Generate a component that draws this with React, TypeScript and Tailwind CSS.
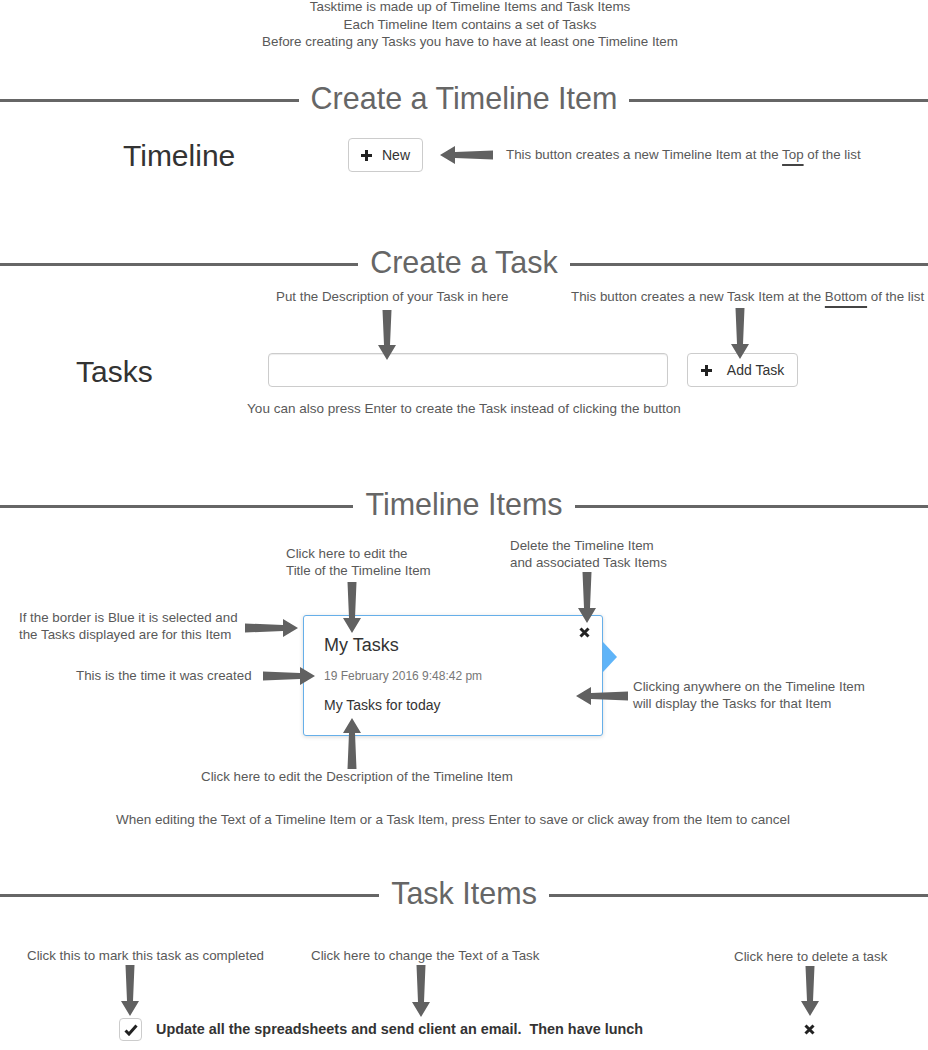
import React from 'react'

type Dir = 'left' | 'right' | 'up' | 'down'

// arrow drawn pointing right, coords swapped for the other directions
function Arrow({ dir, len, className }: { dir: Dir; len: number; className?: string }) {
  const head = 15
  const base: [number, number][] = [
    [0, 4.5],
    [len - head, 6],
    [len - head, 0],
    [len, 9],
    [len - head, 18],
    [len - head, 12],
    [0, 13.5],
  ]
  const pts = base.map(([x, y]) => {
    if (dir === 'right') return [x, y]
    if (dir === 'left') return [len - x, y]
    if (dir === 'down') return [y, x]
    return [y, len - x]
  })
  const horizontal = dir === 'left' || dir === 'right'
  const w = horizontal ? len : 18
  const h = horizontal ? 18 : len
  return (
    <svg width={w} height={h} viewBox={`0 0 ${w} ${h}`} className={className}>
      <polygon points={pts.map((p) => p.join(',')).join(' ')} fill="#616161" />
    </svg>
  )
}

function XIcon({ className }: { className?: string }) {
  return (
    <svg width="11" height="11" viewBox="0 0 11 11" className={className}>
      <path d="M1.5 1.5 L9.5 9.5 M9.5 1.5 L1.5 9.5" stroke="#222" strokeWidth="3" />
    </svg>
  )
}

function PlusIcon() {
  return (
    <svg width="11" height="11" viewBox="0 0 11 11">
      <path d="M4 0h3v4h4v3H7v4H4V7H0V4h4z" fill="#222" />
    </svg>
  )
}

function CheckIcon() {
  return (
    <svg width="14" height="12" viewBox="0 0 14 12">
      <path d="M1.5 6.5 L5 10 L12.5 1.5" stroke="#222" strokeWidth="3" fill="none" />
    </svg>
  )
}

function SectionHeader({ title }: { title: string }) {
  return (
    <div className="flex h-[30px] shrink-0 items-start">
      <div className="mt-[16px] h-[3px] flex-1 bg-[#666]" />
      <h2 className="mx-[12px] whitespace-nowrap text-[30.5px] leading-[30px] text-[#666]">{title}</h2>
      <div className="mt-[16px] h-[3px] flex-1 bg-[#666]" />
    </div>
  )
}

const note = 'absolute whitespace-nowrap text-[13.33px] leading-[17px] text-[#595959]'

export default function App() {
  return (
    <div className="relative flex h-[1050px] w-[928px] flex-col overflow-hidden bg-white font-['Liberation_Sans',Arial,sans-serif]">
      {/* intro */}
      <div className="-mt-[2px] h-[85px] shrink-0 pl-3 text-center text-[13.4px] leading-[17.5px] text-[#595959]">
        <p>Tasktime is made up of Timeline Items and Task Items</p>
        <p>Each Timeline Item contains a set of Tasks</p>
        <p>Before creating any Tasks you have to have at least one Timeline Item</p>
      </div>

      <SectionHeader title="Create a Timeline Item" />
      <div className="h-[134px] shrink-0 pt-[25px]">
        <div className="flex h-[34px] items-center">
          <div className="w-[348px] pl-[123px] pt-[2px] text-[30px] leading-[34px] text-[#333]">Timeline</div>
          <button className="flex h-[34px] w-[75px] items-center justify-center gap-[10px] rounded-[4px] border border-[#ccc] bg-white text-[14px] text-[#333]">
            <PlusIcon />
            New
          </button>
          <Arrow dir="left" len={53} className="ml-[17px]" />
          <span className="ml-[13px] whitespace-nowrap text-[13.33px] text-[#595959]">
            This button creates a new Timeline Item at the{' '}
            <span className="underline decoration-[#444] decoration-2 underline-offset-[5px]">Top</span> of the list
          </span>
        </div>
      </div>

      <SectionHeader title="Create a Task" />
      <div className="h-[212px] shrink-0 pt-[76px]">
        <div className="flex h-[34px] items-center">
          <div className="w-[268px] pl-[76px] pt-[4px] text-[30px] leading-[34px] text-[#333]">Tasks</div>
          <input className="h-[34px] w-[400px] rounded-[4px] border border-[#ccc] bg-white px-3 shadow-[inset_0_1px_1px_rgba(0,0,0,0.075)] outline-none" />
          <button className="ml-[19px] flex h-[34px] w-[111px] items-center justify-center gap-[15px] rounded-[4px] border border-[#ccc] bg-white text-[14px] text-[#333]">
            <PlusIcon />
            Add Task
          </button>
        </div>
        <p className="mt-[13px] text-center text-[13.5px] leading-[17px] text-[#595959]">
          You can also press Enter to create the Task instead of clicking the button
        </p>
      </div>

      <SectionHeader title="Timeline Items" />
      <div className="h-[359px] shrink-0 pt-[96px]">
        <div className="relative ml-[303px] h-[121px] w-[300px] rounded-[3px] border border-[#66afe9] bg-white px-[20px] pt-[19px] shadow-[0_1px_4px_rgba(0,0,0,0.15)]">
          <h4 className="text-[18px] leading-[20px] text-[#333]">My Tasks</h4>
          <div className="mt-[13px] text-[12px] leading-[16px] text-[#777]">19 February 2016 9:48:42 pm</div>
          <div className="mt-[11px] text-[14px] leading-[20px] text-[#333]">My Tasks for today</div>
          <XIcon className="absolute right-[12px] top-[11px]" />
          <div className="absolute left-[299px] top-[26px] h-0 w-0 border-y-[15px] border-l-[14px] border-y-transparent border-l-[#5fb4f8]" />
        </div>
        <p className="mt-[32px] pl-[201px] text-[13.33px] leading-[17px] text-[#595959]">
          Click here to edit the Description of the Timeline Item
        </p>
        <p className="mt-[26px] pl-[116px] text-[13.5px] leading-[17px] text-[#595959]">
          When editing the Text of a Timeline Item or a Task Item, press Enter to save or click away from the Item to cancel
        </p>
      </div>

      <SectionHeader title="Task Items" />
      <div className="flex-1 pt-[110px]">
        <div className="flex h-[23px] items-center">
          <div className="flex w-[804px] items-center pl-[119px]">
            <div className="flex h-[23px] w-[23px] items-center justify-center rounded-[4px] border border-[#ccc] bg-white">
              <CheckIcon />
            </div>
            <span className="ml-[14px] whitespace-pre text-[14.4px] font-bold text-[#333]">
              {'Update all the spreadsheets and send client an email.  Then have lunch'}
            </span>
          </div>
          <XIcon />
        </div>
      </div>

      {/* callouts */}
      <span className={`${note} left-[276px] top-[288px]`}>Put the Description of your Task in here</span>
      <span className={`${note} left-[571px] top-[288px]`}>
        This button creates a new Task Item at the{' '}
        <span className="underline decoration-[#444] decoration-2 underline-offset-[5px]">Bottom</span> of the list
      </span>
      <Arrow dir="down" len={50} className="absolute left-[378px] top-[310px]" />
      <Arrow dir="down" len={51} className="absolute left-[731px] top-[308px]" />

      <span className={`${note} left-[286px] top-[545px]`}>
        Click here to edit the
        <br />
        Title of the Timeline Item
      </span>
      <span className={`${note} left-[510px] top-[537px]`}>
        Delete the Timeline Item
        <br />
        and associated Task Items
      </span>
      <span className={`${note} left-[19px] top-[609px]`}>
        If the border is Blue it is selected and
        <br />
        the Tasks displayed are for this Item
      </span>
      <span className={`${note} left-[76px] top-[667px]`}>This is the time it was created</span>
      <span className={`${note} left-[633px] top-[678px]`}>
        Clicking anywhere on the Timeline Item
        <br />
        will display the Tasks for that Item
      </span>
      <Arrow dir="down" len={51} className="absolute left-[343px] top-[582px]" />
      <Arrow dir="down" len={51} className="absolute left-[578px] top-[572px]" />
      <Arrow dir="right" len={53} className="absolute left-[245px] top-[619px]" />
      <Arrow dir="right" len={52} className="absolute left-[263px] top-[667px]" />
      <Arrow dir="left" len={52} className="absolute left-[576px] top-[687px]" />
      <Arrow dir="up" len={51} className="absolute left-[343px] top-[718px]" />

      <span className={`${note} left-[27px] top-[947px]`}>Click this to mark this task as completed</span>
      <span className={`${note} left-[311px] top-[947px]`}>Click here to change the Text of a Task</span>
      <span className={`${note} left-[734px] top-[948px]`}>Click here to delete a task</span>
      <Arrow dir="down" len={51} className="absolute left-[121px] top-[965px]" />
      <Arrow dir="down" len={52} className="absolute left-[412px] top-[965px]" />
      <Arrow dir="down" len={50} className="absolute left-[801px] top-[966px]" />
    </div>
  )
}
